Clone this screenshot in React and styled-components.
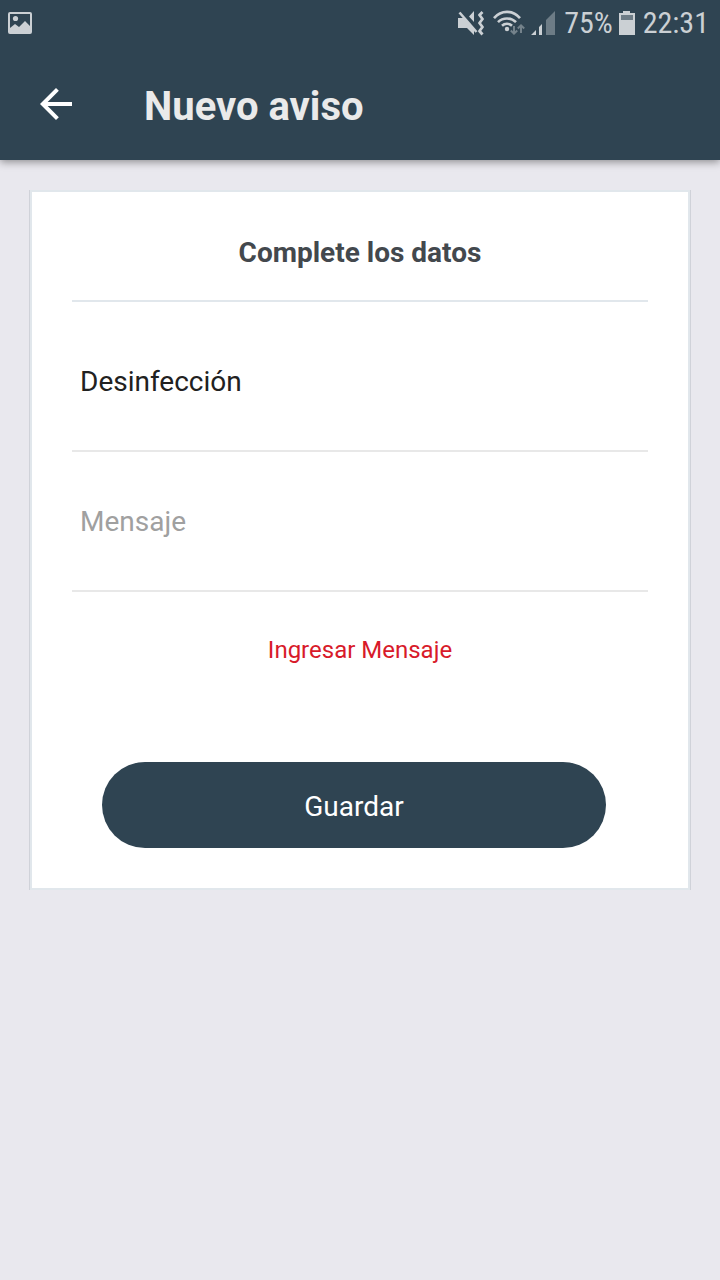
import React from "react";
import styled, { createGlobalStyle } from "styled-components";

const GlobalStyle = createGlobalStyle`
  *, *::before, *::after { box-sizing: border-box; }
  body {
    margin: 0;
    background: #e9e8ee;
    font-family: Roboto, "Liberation Sans", sans-serif;
  }
`;

const Screen = styled.div`
  min-height: 100vh;
  display: flex;
  flex-direction: column;
`;

const Header = styled.header`
  background: #2f4452;
  box-shadow: 0 2px 8px rgba(0, 0, 0, 0.4);
`;

const StatusBar = styled.div`
  height: 48px;
  padding: 0 11px 2px 8px;
  display: flex;
  align-items: center;
  justify-content: space-between;
  color: #cbd0d4;
`;

const StatusGroup = styled.div`
  display: flex;
  align-items: center;
  gap: 6px;
`;

const StatusText = styled.span`
  font-family: "Roboto Condensed", Roboto, sans-serif;
  font-size: 30px;
  line-height: 46px;
`;

const Icon = styled.svg`
  display: block;
  flex: none;
`;

const AppBar = styled.div`
  height: 112px;
  padding: 0 32px;
  display: flex;
  align-items: center;
  gap: 64px;
`;

const BackButton = styled.button`
  padding: 0;
  border: 0;
  background: none;
  color: #fff;
  cursor: pointer;
`;

const Title = styled.h1`
  margin: 0;
  padding-top: 6px;
  color: #eaeaea;
  font-size: 40px;
  font-weight: 700;
  line-height: 48px;
`;

const Main = styled.main`
  padding: 30px;
`;

const Card = styled.form`
  padding: 0 40px 40px;
  background: #fff;
  border: 2px solid #e1e7ec;
  box-shadow: -1px 0 0 #d0d2d9, 1px 0 0 #d0d2d9;
`;

const CardTitle = styled.h2`
  margin: 0;
  padding: 45px 0 31px;
  border-bottom: 2px solid #e1e7ec;
  color: #43484d;
  font-size: 28px;
  font-weight: 700;
  line-height: 32px;
  text-align: center;
`;

const Field = styled.input`
  display: block;
  width: 100%;
  height: 140px;
  margin-top: ${(p) => p.$spaced ? 10 : 0}px;
  padding: 0 8px;
  border: 0;
  border-bottom: 2px solid #e8e8e8;
  border-radius: 0;
  outline: none;
  background: none;
  color: #212121;
  font-family: inherit;
  font-size: 28px;
  &::placeholder { color: #a0a0a0; opacity: 1; }
`;

const ErrorText = styled.p`
  margin: 0;
  padding: 42px 0 96px;
  color: #d81a2a;
  font-size: 24px;
  line-height: 32px;
  text-align: center;
`;

const Actions = styled.div`
  padding: 0 42px 0 30px;
`;

const SaveButton = styled.button`
  display: block;
  width: 100%;
  height: 86px;
  padding: 2px 0 0;
  border: 0;
  border-radius: 43px;
  background: #2f4452;
  color: #fff;
  font-family: inherit;
  font-size: 28px;
  cursor: pointer;
`;

const PictureIcon = () => (
  <Icon width="24" height="24" viewBox="0 0 24 24" fill="currentColor" aria-hidden="true">
    <path fillRule="evenodd" d="M2 1h20a2 2 0 0 1 2 2v18a2 2 0 0 1-2 2H2a2 2 0 0 1-2-2V3a2 2 0 0 1 2-2zM2 3v14l5-4 4 3 6-6 5 5V3z" />
    <circle cx="7.5" cy="7.5" r="2.6" />
  </Icon>
);

const MutedIcon = () => (
  <Icon width="27" height="26" viewBox="0 0 27 26" aria-hidden="true">
    <path fill="currentColor" d="M1 8h6l10 10.500V25l-7-7H1zM17 1v11l-5-5.500z" />
    <path d="M2.500 2.500l17 19.500" stroke="currentColor" strokeWidth="2.600" />
    <path d="M25.500 2l-3 3 3 4-3 4 3 4-3 4 3 3.500" fill="none" stroke="currentColor" strokeWidth="2.800" strokeLinejoin="round" />
  </Icon>
);

const WifiIcon = () => (
  <Icon width="35" height="26" viewBox="0 0 35 26" aria-hidden="true">
    <g fill="none" stroke="currentColor" strokeWidth="2.600">
      <path d="M4 8.200C11-.2 23-.2 30 8.200" />
      <path d="M8 12.200c4.800-4.900 13.200-4.900 18 0" />
      <path d="M12 15.800c2.800-2.700 7.200-2.700 10 0" />
    </g>
    <circle cx="17" cy="19" r="2.200" fill="currentColor" />
    <path d="M24 16v7.500M20.800 20.500l3.200 3.200 3.200-3.200M31 23v-7.500M27.800 18.500l3.200-3.200 3.200 3.200" fill="none" stroke="#74828b" strokeWidth="2" />
  </Icon>
);

const SignalIcon = () => (
  <Icon width="27" height="26" viewBox="0 0 27 26" aria-hidden="true">
    <path d="M0 25l5-5v5zM8 17l3-3v11H8z" fill="currentColor" />
    <path d="M15 10l9-9v24h-9z" fill="#6d7c86" />
  </Icon>
);

const BatteryIcon = () => (
  <Icon width="18" height="26" viewBox="0 0 18 26" aria-hidden="true">
    <path d="M4 1h7v2h5v22H0V3h4z" fill="currentColor" />
    <path d="M2 5h12v5H2z" fill="#6d7c86" />
  </Icon>
);

const ArrowBackIcon = () => (
  <Icon width="48" height="48" viewBox="0 0 24 24" fill="currentColor" aria-hidden="true">
    <path d="M20 11H7.830l5.590-5.590L12 4l-8 8 8 8 1.410-1.410L7.830 13H20z" />
  </Icon>
);

export default function App() {
  return (
    <>
      <GlobalStyle />
      <Screen>
        <Header>
          <StatusBar>
            <PictureIcon />
            <StatusGroup>
              <MutedIcon />
              <WifiIcon />
              <SignalIcon />
              <StatusText>75%</StatusText>
              <BatteryIcon />
              <StatusText>22:31</StatusText>
            </StatusGroup>
          </StatusBar>
          <AppBar>
            <BackButton type="button" aria-label="Volver">
              <ArrowBackIcon />
            </BackButton>
            <Title>Nuevo aviso</Title>
          </AppBar>
        </Header>
        <Main>
          <Card onSubmit={(e) => e.preventDefault()}>
            <CardTitle>Complete los datos</CardTitle>
            <Field $spaced aria-label="Título" defaultValue="Desinfección" />
            <Field aria-label="Mensaje" aria-describedby="mensaje-error" placeholder="Mensaje" />
            <ErrorText id="mensaje-error">Ingresar Mensaje</ErrorText>
            <Actions>
              <SaveButton type="submit">Guardar</SaveButton>
            </Actions>
          </Card>
        </Main>
      </Screen>
    </>
  );
}
